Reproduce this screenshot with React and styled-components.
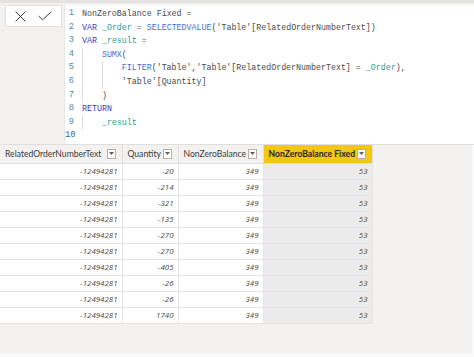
import React from 'react';
import styled, { createGlobalStyle } from 'styled-components';

const GlobalStyle = createGlobalStyle`
  html, body {
    margin: 0;
    padding: 0;
    background: #f3f2f1;
  }
  * { box-sizing: border-box; }
`;

const Page = styled.div`
  width: 474px;
  height: 357px;
  display: flex;
  flex-direction: column;
  overflow: hidden;
  background: #f3f2f1;
  font-family: "Noto Sans", "Open Sans", sans-serif;
`;

const FormulaBar = styled.div`
  height: 145px;
  display: flex;
  align-items: flex-start;
  padding-top: 5px;
  border-top: 3px solid #e4e3e2;
  border-bottom: 1px solid #e1dfdd;
  background: #f3f2f1;
`;

const ActionBox = styled.div`
  margin-left: 5px;
  margin-top: -3px;
  width: 57px;
  height: 22px;
  display: flex;
  align-items: center;
  gap: 12px;
  padding-left: 9px;
  background: #fff;
  border: 1px solid #e1e1e1;
`;

const IconButton = styled.span`
  display: flex;
  align-items: center;
  justify-content: center;
  color: #3b3a39;
`;

const Editor = styled.div`
  flex: 1;
  align-self: stretch;
  margin-left: 2px;
  margin-top: -3px;
  background: #fff;
  border-left: 1px solid #e6e6e6;
  padding-top: 2px;
  font-family: "Liberation Mono", "DejaVu Sans Mono", monospace;
  font-size: 8.3px;
`;

const Line = styled.div`
  display: flex;
  height: 13.6px;
  line-height: 13.6px;
  white-space: pre;
`;

const LineNo = styled.span`
  width: 17px;
  padding-right: 8px;
  text-align: right;
  color: ${({ $current }) => ($current ? '#2f6aa8' : '#5f8799')};
  font-family: "Liberation Mono", monospace;
  font-size: 8.8px;
`;

const Indent = styled.span`
  display: inline-block;
  width: 4ch;
  height: 13.6px;
  border-left: 1px solid #dcdcdc;
`;

const colors = {
  plain: '#4a4a4a',
  keyword: '#3838c0',
  func: '#3f70cc',
  variable: '#2a9d9a',
  op: '#666',
};

const Token = styled.span`
  color: ${({ $kind }) => colors[$kind] || colors.plain};
`;

const TableArea = styled.div`
  flex: 1;
  background: #f3f2f1;
  border-right: 2px solid #fafafa;
  border-bottom: 4px solid #fafafa;
`;

const Table = styled.table`
  border-collapse: collapse;
  table-layout: fixed;
  width: 372px;
`;

const HeadCell = styled.th`
  height: 18px;
  padding: 0 6px 0 5px;
  background: ${({ $selected }) => ($selected ? '#f2c811' : '#f3f2f1')};
  border-right: 1px solid #e1dfdd;
  border-bottom: 1px solid #e1dfdd;
  font-family: Lato, "Noto Sans", sans-serif;
  font-size: 8.6px;
  font-weight: ${({ $selected }) => ($selected ? 700 : 400)};
  color: ${({ $selected }) => ($selected ? '#252423' : '#3b3a39')};
  text-align: left;
  white-space: nowrap;
`;

const HeadInner = styled.div`
  display: flex;
  align-items: center;
  justify-content: space-between;
`;

const Dropdown = styled.span`
  display: flex;
  align-items: center;
  justify-content: center;
  width: 9px;
  height: 10px;
  background: #fff;
  border: 1px solid #b3b0ad;
`;

const Cell = styled.td`
  height: 16px;
  padding: 0 4px;
  background: ${({ $selected }) => ($selected ? '#ebebeb' : '#fff')};
  border-right: 1px solid #e6e5e4;
  border-bottom: 1px solid #e6e5e4;
  font-size: 7.9px;
  font-style: italic;
  color: #55534f;
  text-align: right;
  white-space: nowrap;
`;

const code = [
  [['plain', 'NonZeroBalance Fixed =']],
  [['keyword', 'VAR '], ['variable', '_Order'], ['op', ' = '], ['func', 'SELECTEDVALUE'], ['plain', "('Table'[RelatedOrderNumberText])"]],
  [['keyword', 'VAR '], ['variable', '_result'], ['op', ' =']],
  { indent: 1, tokens: [['func', 'SUMX'], ['plain', '(']] },
  { indent: 2, tokens: [['func', 'FILTER'], ['plain', "('Table','Table'[RelatedOrderNumberText] = "], ['variable', '_Order'], ['plain', '),']] },
  { indent: 2, tokens: [['plain', "'Table'[Quantity]"]] },
  { indent: 1, tokens: [['plain', ')']] },
  [['keyword', 'RETURN']],
  { indent: 1, tokens: [['variable', '_result']] },
  [],
];

const quantities = [-20, -214, -321, -135, -270, -270, -405, -26, -26, 1740];

const columns = [
  { name: 'RelatedOrderNumberText', width: 122 },
  { name: 'Quantity', width: 56 },
  { name: 'NonZeroBalance', width: 85 },
  { name: 'NonZeroBalance Fixed', width: 109, selected: true },
];

const CloseIcon = () => (
  <svg width="11" height="11" viewBox="0 0 11 11" fill="none" stroke="currentColor" strokeWidth="1">
    <path d="M0.6 0.6 L10.4 10.4 M10.4 0.6 L0.6 10.4" />
  </svg>
);

const CheckIcon = () => (
  <svg width="14" height="10" viewBox="0 0 14 10" fill="none" stroke="currentColor" strokeWidth="1">
    <path d="M0.7 5 L4.6 8.8 L13.3 0.7" />
  </svg>
);

const Caret = () => (
  <svg width="5" height="3" viewBox="0 0 5 3">
    <path d="M0 0 L5 0 L2.5 3 Z" fill="#605e5c" />
  </svg>
);

export default function App() {
  return (
    <Page>
      <GlobalStyle />
      <FormulaBar>
        <ActionBox>
          <IconButton><CloseIcon /></IconButton>
          <IconButton><CheckIcon /></IconButton>
        </ActionBox>
        <Editor>
          {code.map((line, i) => {
            const indent = Array.isArray(line) ? 0 : line.indent;
            const tokens = Array.isArray(line) ? line : line.tokens;
            return (
              <Line key={i}>
                <LineNo $current={i === code.length - 1}>{i + 1}</LineNo>
                {Array.from({ length: indent }).map((_, k) => <Indent key={k} />)}
                {tokens.map(([kind, text], k) => (
                  <Token key={k} $kind={kind}>{text}</Token>
                ))}
              </Line>
            );
          })}
        </Editor>
      </FormulaBar>
      <TableArea>
        <Table>
          <colgroup>
            {columns.map((c) => <col key={c.name} style={{ width: c.width }} />)}
          </colgroup>
          <thead>
            <tr>
              {columns.map((c) => (
                <HeadCell key={c.name} $selected={c.selected}>
                  <HeadInner>
                    <span>{c.name}</span>
                    <Dropdown><Caret /></Dropdown>
                  </HeadInner>
                </HeadCell>
              ))}
            </tr>
          </thead>
          <tbody>
            {quantities.map((q, i) => (
              <tr key={i}>
                <Cell>-12494281</Cell>
                <Cell>{q}</Cell>
                <Cell>349</Cell>
                <Cell $selected>53</Cell>
              </tr>
            ))}
          </tbody>
        </Table>
      </TableArea>
    </Page>
  );
}
